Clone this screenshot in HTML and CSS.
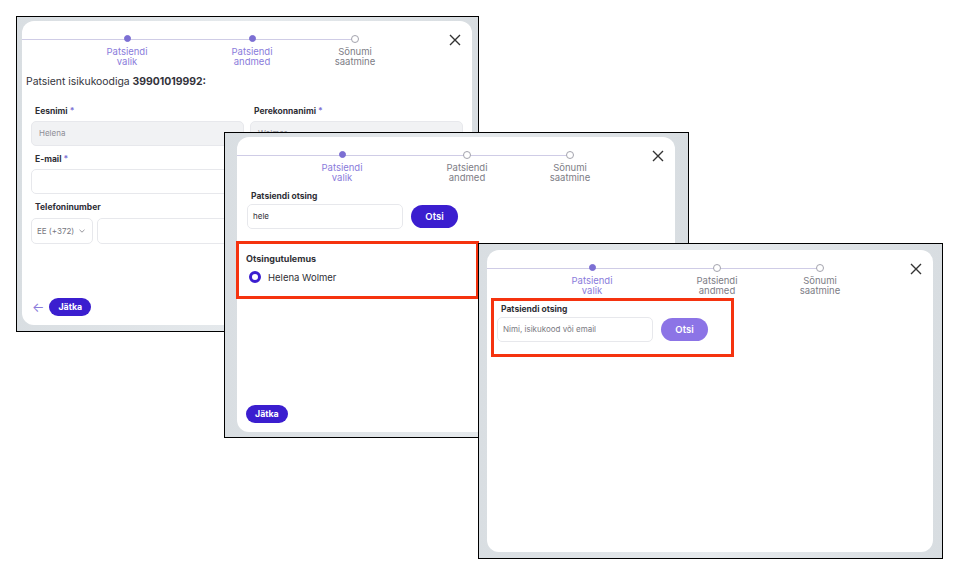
FILE: index.html
```html
<!DOCTYPE html>
<html lang="et">
<head>
    <meta charset="UTF-8">
    <title>Sõnumi saatmine</title>
    <link rel="stylesheet" href="styles.css">
</head>
<body>
<div class="desk">

    <!-- samm 2: patsiendi andmed -->
    <div class="shot shot_1">
        <div class="card">
            <div class="head">
                <div class="stepper">
                    <div class="step done"><span class="dot"></span><span class="label">Patsiendi<br>valik</span></div>
                    <div class="step done step_2"><span class="dot"></span><span class="label">Patsiendi<br>andmed</span></div>
                    <div class="step step_3"><span class="dot"></span><span class="label">Sõnumi<br>saatmine</span></div>
                </div>
                <span class="close"><svg width="12" height="12" viewBox="0 0 12 12"><path d="M1 1L11 11M11 1L1 11" stroke="#333" stroke-width="1.4" fill="none"/></svg></span>
            </div>
            <p class="id_line">Patsient isikukoodiga <b>39901019992:</b></p>
            <div class="form">
                <div class="field">
                    <label>Eesnimi <i>*</i></label>
                    <div class="input disabled">Helena</div>
                </div>
                <div class="field">
                    <label>Perekonnanimi <i>*</i></label>
                    <div class="input disabled">Wolmer</div>
                </div>
                <div class="field wide">
                    <label>E-mail <i>*</i></label>
                    <div class="input"></div>
                </div>
                <div class="field wide">
                    <label>Telefoninumber</label>
                    <div class="phone">
                        <div class="input select">EE (+372)<svg class="caret" width="6" height="4" viewBox="0 0 6 4"><path d="M0.5 0.8L3 3.2L5.5 0.8" stroke="#8a8a92" stroke-width="0.9" fill="none"/></svg></div>
                        <div class="input grow"></div>
                    </div>
                </div>
            </div>
            <div class="foot">
                <span class="back">←</span>
                <span class="btn">Jätka</span>
            </div>
        </div>
    </div>

    <!-- samm 1: otsingu tulemus -->
    <div class="shot shot_2">
        <div class="card">
            <div class="head">
                <div class="stepper">
                    <div class="step done"><span class="dot"></span><span class="label">Patsiendi<br>valik</span></div>
                    <div class="step step_2"><span class="dot"></span><span class="label">Patsiendi<br>andmed</span></div>
                    <div class="step step_3"><span class="dot"></span><span class="label">Sõnumi<br>saatmine</span></div>
                </div>
                <span class="close"><svg width="12" height="12" viewBox="0 0 12 12"><path d="M1 1L11 11M11 1L1 11" stroke="#333" stroke-width="1.4" fill="none"/></svg></span>
            </div>
            <div class="search">
                <label>Patsiendi otsing</label>
                <div class="search_row">
                    <div class="input text">hele</div>
                    <span class="btn big">Otsi</span>
                </div>
            </div>
            <div class="result">
                <label>Otsingutulemus</label>
                <div class="radio_row"><span class="radio"></span>Helena Wolmer</div>
            </div>
            <div class="foot">
                <span class="btn">Jätka</span>
            </div>
        </div>
        <div class="mark mark_2"></div>
    </div>

    <!-- samm 1: tühi otsing -->
    <div class="shot shot_3">
        <div class="card">
            <div class="head">
                <div class="stepper">
                    <div class="step done"><span class="dot"></span><span class="label">Patsiendi<br>valik</span></div>
                    <div class="step step_2"><span class="dot"></span><span class="label">Patsiendi<br>andmed</span></div>
                    <div class="step step_3"><span class="dot"></span><span class="label">Sõnumi<br>saatmine</span></div>
                </div>
                <span class="close"><svg width="12" height="12" viewBox="0 0 12 12"><path d="M1 1L11 11M11 1L1 11" stroke="#333" stroke-width="1.4" fill="none"/></svg></span>
            </div>
            <div class="search">
                <label>Patsiendi otsing</label>
                <div class="search_row">
                    <div class="input placeholder">Nimi, isikukood või email</div>
                    <span class="btn big off">Otsi</span>
                </div>
            </div>
        </div>
        <div class="mark mark_3"></div>
    </div>

</div>
</body>
</html>
```

FILE: styles.css
```css
* {
    box-sizing: border-box;
}

body {
    margin: 0;
    background: #fff;
    font-family: Inter, "Noto Sans", sans-serif;
    color: #2b2b33;
}

.desk {
    position: relative;
    width: 961px;
    height: 575px;
    overflow: hidden;
}

/* ekraanipildid */
.shot {
    position: absolute;
    display: flex;
    border: 1px solid #000;
    background: linear-gradient(90deg, #d9dee2, #e6eaed 50%, #d8dde1);
}

.shot_1 {
    left: 16px;
    top: 16px;
    width: 463px;
    height: 316px;
    padding: 4px 6px 6px 5px;
}

.shot_2 {
    left: 224px;
    top: 132px;
    width: 465px;
    height: 306px;
    padding: 4px 13px 5px 12px;
}

.shot_3 {
    left: 478px;
    top: 243px;
    width: 465px;
    height: 316px;
    padding: 6px 9px 6px 8px;
}

.card {
    flex: 1;
    display: flex;
    flex-direction: column;
    background: #fff;
    border-radius: 12px;
    overflow: hidden;
}

/* sammud */
.head {
    display: flex;
    height: 46px;
}

.stepper {
    position: relative;
    display: flex;
    padding-left: 65px;
}

.stepper::before {
    content: "";
    position: absolute;
    left: 0;
    top: 18px;
    width: 333px;
    height: 1px;
    background: #cfcce6;
}

.step {
    position: relative;
    width: 80px;
    display: flex;
    flex-direction: column;
    align-items: center;
}

.step_2 {
    margin-left: 45px;
}

.step_3 {
    margin-left: 23px;
}

.dot {
    width: 8px;
    height: 8px;
    margin-top: 14px;
    border-radius: 50%;
    border: 1px solid #a3a3ad;
    background: #fff;
}

.label {
    margin-top: 4px;
    font-size: 9.5px;
    line-height: 10px;
    text-align: center;
    color: #7d7d86;
}

.done .dot {
    width: 7px;
    height: 7px;
    border-color: #7c6fd3;
    background: #7c6fd3;
}

.done .label {
    margin-top: 5px;
    color: #8a7cdb;
}

.close {
    margin: 13px 11px 0 auto;
    width: 12px;
    height: 12px;
}

.close svg {
    display: block;
}

/* patsiendi andmed */
.id_line {
    margin: 9px 0 0 4px;
    font-size: 10.4px;
    line-height: 12px;
    color: #33333b;
}

.id_line b {
    font-weight: 700;
}

.form {
    display: grid;
    grid-template-columns: 1fr 1fr;
    column-gap: 6px;
    row-gap: 7px;
    padding: 0 9px;
    margin-top: 17px;
}

.field {
    display: flex;
    flex-direction: column;
}

.wide {
    grid-column: 1 / 3;
}

label {
    display: block;
    padding-left: 4px;
    margin-bottom: 4px;
    font-size: 8.5px;
    line-height: 12px;
    font-weight: 700;
    color: #2f2f36;
}

label i {
    font-style: normal;
    color: #7c6fd3;
}

.input {
    height: 25px;
    padding: 0 7px;
    border: 1px solid #e7e8ec;
    border-radius: 5px;
    background: #fff;
    font-size: 8px;
    line-height: 23px;
    color: #3a3a42;
    white-space: nowrap;
}

.disabled {
    background: #f1f2f4;
    color: #8e8e96;
}

.phone {
    display: flex;
    gap: 4px;
    height: 26px;
    margin-top: 1px;
}

.phone .input {
    height: 26px;
    line-height: 24px;
}

.select {
    display: flex;
    align-items: center;
    width: 62px;
    padding: 0 5px;
    color: #777780;
}

.caret {
    margin-left: 5px;
}

.grow {
    flex: 1;
}

.foot {
    display: flex;
    align-items: center;
    margin-top: auto;
    padding: 0 0 9px 9px;
}

.back {
    margin: 0 5px 0 1px;
    font-size: 13px;
    line-height: 16px;
    color: #8a7cdb;
}

.btn {
    display: inline-block;
    height: 18px;
    padding: 0 9px;
    border-radius: 9px;
    background: #3b1ecf;
    color: #fff;
    font-size: 8.8px;
    font-weight: 700;
    line-height: 18px;
}

/* otsing */
.search {
    margin-top: 7px;
    padding: 0 10px;
}

.search label {
    margin-bottom: 2px;
}

.search_row {
    display: flex;
    align-items: center;
    gap: 8px;
}

.search .input {
    width: 156px;
}

.text {
    color: #2f2f36;
    padding-left: 5px;
}

.placeholder {
    color: #7a7a82;
    padding-left: 5px;
}

.btn.big {
    height: 23px;
    width: 47px;
    padding: 0;
    border-radius: 12px;
    text-align: center;
    line-height: 23px;
    font-size: 9.5px;
    font-weight: 600;
}

.btn.off {
    background: #8c74e6;
}

.result {
    margin-top: 24px;
    padding: 0 9px;
}

.result label {
    padding-left: 0;
    margin-bottom: 6px;
    font-size: 9px;
}

.radio_row {
    display: flex;
    align-items: center;
    gap: 7px;
    padding-left: 3px;
    font-size: 9.5px;
    color: #2f2f36;
}

.radio {
    width: 12px;
    height: 12px;
    border-radius: 50%;
    border: 3.5px solid #3b1ecf;
    background: #fff;
}

/* punased märgised */
.mark {
    position: absolute;
    border: 3px solid #f5330f;
}

.mark_2 {
    left: 11px;
    top: 108px;
    width: 243px;
    height: 58px;
}

.mark_3 {
    left: 12px;
    top: 54px;
    width: 243px;
    height: 59px;
}
```
